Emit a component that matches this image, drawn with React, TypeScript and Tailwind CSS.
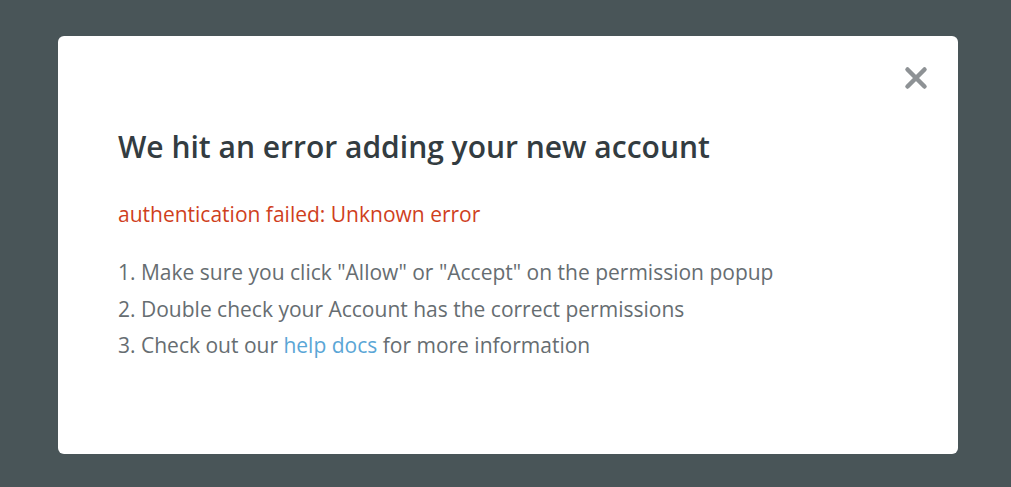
export default function App() {
  return (
    <div className="w-[1011px] h-[487px] bg-[#495558] pt-[36px] pl-[58px]" style={{ fontFamily: '"Open Sans", sans-serif' }}>
      <div className="relative w-[900px] h-[418px] bg-white rounded-[6px] pl-[60px] pt-[91px]">
        <button className="absolute right-[30px] top-[30px] w-[24px] h-[24px] flex items-center justify-center">
          <svg width="24" height="24" viewBox="0 0 24 24">
            <path d="M3.5 3.5 L20.5 20.5 M20.5 3.5 L3.5 20.5" stroke="#8e9295" strokeWidth="4.5" strokeLinecap="round" />
          </svg>
        </button>
        <h1 className="text-[30px] leading-[40px] font-semibold text-[#333c41]">We hit an error adding your new account</h1>
        <p className="mt-[33px] text-[21px] leading-[28px] text-[#cf3f1d]">authentication failed: Unknown error</p>
        <div className="mt-[26px] text-[21px] leading-[36.5px] text-[#666d71]">
          <p>1. Make sure you click "Allow" or "Accept" on the permission popup</p>
          <p>2. Double check your Account has the correct permissions</p>
          <p>3. Check out our <a className="text-[#5aa6d6]">help docs</a> for more information</p>
        </div>
      </div>
    </div>
  );
}
